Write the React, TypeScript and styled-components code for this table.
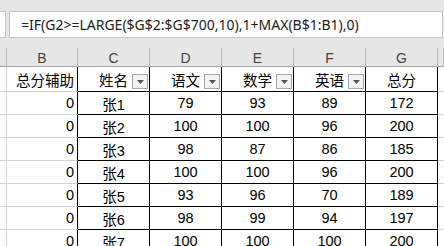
import React from "react";
import styled, { createGlobalStyle, css } from "styled-components";

const Global = createGlobalStyle`
  html, body { margin: 0; padding: 0; background: #ffffff; overflow: hidden; }
  * { box-sizing: border-box; }
`;

const Page = styled.div`
  width: 444px;
  height: 246px;
  overflow: hidden;
  display: flex;
  flex-direction: column;
`;

const FormulaArea = styled.div`
  background: #e6e6e6;
  padding: 11px 1px 10px 0;
  display: flex;
  gap: 3px;
`;

const NameBox = styled.div`
  width: 6px;
  height: 27px;
  background: #ffffff;
  border: 1px solid #c6c6c6;
  border-left: none;
`;

const FormulaBox = styled.div`
  flex: 1;
  height: 27px;
  background: #ffffff;
  border: 1px solid #c6c6c6;
  padding-left: 11px;
  display: flex;
  align-items: center;
  font-family: "Noto Sans", "Open Sans", sans-serif;
  font-size: 14px;
  color: #222222;
  white-space: nowrap;
`;

const Sheet = styled.div`
  display: grid;
  grid-template-columns: 7px 71px 72px 72px 72px 72px 72px 1fr;
  grid-template-rows: 19px 25px repeat(7, 23px);
`;

const ColHeader = styled.div`
  background: #e6e6e6;
  border-right: 1px solid #bdbdbd;
  border-bottom: 1px solid #a6a6a6;
  display: flex;
  align-items: center;
  justify-content: center;
  font-family: "Liberation Sans", Arial, sans-serif;
  font-size: 14px;
  color: #444444;
  padding-top: 1px;
`;

type Kind = "a" | "b" | "t" | "h";

const Cell = styled.div<{ $kind: Kind }>`
  position: relative;
  display: flex;
  align-items: center;
  font-family: "Liberation Sans", "Noto Sans CJK SC", sans-serif;
  font-size: 14.5px;
  color: #000000;
  white-space: nowrap;
  background: #ffffff;
  ${(p) =>
    p.$kind === "a" &&
    css`
      border-right: 1px solid #d4d4d4;
      border-bottom: 1px solid #d4d4d4;
    `}
  ${(p) =>
    p.$kind === "b" &&
    css`
      justify-content: flex-end;
      padding-right: 3px;
      border-right: 1px solid #000000;
      border-bottom: 1px solid #d4d4d4;
    `}
  ${(p) =>
    p.$kind === "t" &&
    css`
      justify-content: center;
      border-right: 1px solid #000000;
      border-bottom: 1px solid #000000;
    `}
  ${(p) =>
    p.$kind === "h" &&
    css`
      border-bottom: 1px solid #d4d4d4;
    `}
`;

const DropButton = styled.span`
  position: absolute;
  right: 1px;
  top: 7px;
  width: 16px;
  height: 15px;
  background: #f3f3f3;
  border: 1px solid #a8a8a8;
  display: flex;
  align-items: center;
  justify-content: center;
`;

const Arrow = () => (
  <svg width="7" height="4" viewBox="0 0 7 4">
    <path d="M0 0 H7 L3.5 4 Z" fill="#555555" />
  </svg>
);

const headers: { label: string; filter: boolean }[] = [
  { label: "姓名", filter: true },
  { label: "语文", filter: true },
  { label: "数学", filter: true },
  { label: "英语", filter: true },
  { label: "总分", filter: false },
];

const rows: (string | number)[][] = [
  ["张1", 79, 93, 89, 172],
  ["张2", 100, 100, 96, 200],
  ["张3", 98, 87, 86, 185],
  ["张4", 100, 100, 96, 200],
  ["张5", 93, 96, 70, 189],
  ["张6", 98, 99, 94, 197],
  ["张7", 100, 100, 100, 200],
];

export default function App() {
  return (
    <Page>
      <Global />
      <FormulaArea>
        <NameBox />
        <FormulaBox>=IF(G2&gt;=LARGE($G$2:$G$700,10),1+MAX(B$1:B1),0)</FormulaBox>
      </FormulaArea>
      <Sheet>
        <ColHeader />
        {["B", "C", "D", "E", "F", "G"].map((c) => (
          <ColHeader key={c}>{c}</ColHeader>
        ))}
        <ColHeader />

        <Cell $kind="a" />
        <Cell $kind="b">总分辅助</Cell>
        {headers.map((h) => (
          <Cell $kind="t" key={h.label}>
            {h.label}
            {h.filter && (
              <DropButton>
                <Arrow />
              </DropButton>
            )}
          </Cell>
        ))}
        <Cell $kind="h" />

        {rows.map((r, i) => (
          <React.Fragment key={i}>
            <Cell $kind="a" />
            <Cell $kind="b">0</Cell>
            {r.map((v, j) => (
              <Cell $kind="t" key={j}>
                {v}
              </Cell>
            ))}
            <Cell $kind="h" />
          </React.Fragment>
        ))}
      </Sheet>
    </Page>
  );
}
